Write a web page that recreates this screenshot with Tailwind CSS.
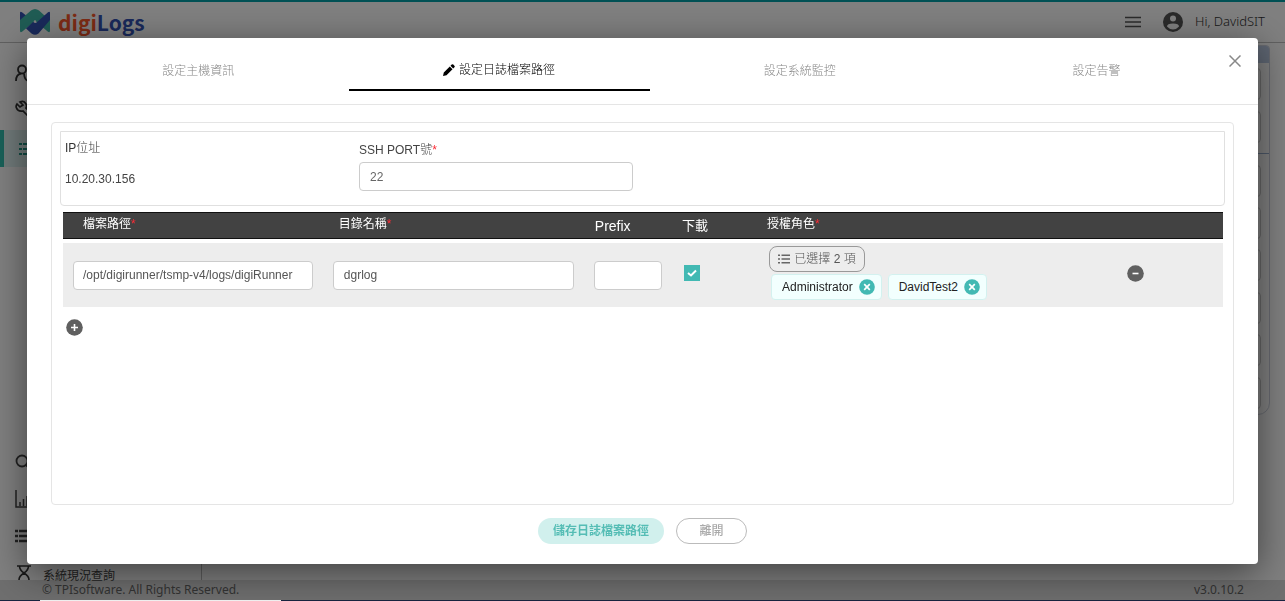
<!DOCTYPE html>
<html lang="zh-Hant">
<head>
<meta charset="utf-8">
<title>digiLogs</title>
<script src="https://cdn.jsdelivr.net/npm/@tailwindcss/browser@4"></script>
</head>
<body class="h-screen overflow-hidden bg-white font-['Liberation_Sans','Noto_Sans_CJK_TC',sans-serif] text-xs text-[#444]">
<div class="flex h-full flex-col">
  <header class="flex h-[43px] shrink-0 items-center justify-between border-t-2 border-b border-t-[#00a0a8] border-b-[#c0c0c0] pr-5 pl-5">
    <a href="#" class="flex items-center gap-2 font-['Noto_Sans_CJK_TC',sans-serif] text-[21px] leading-8 font-bold">
      <svg class="h-[26px] w-[30px]" viewBox="0 0 30 26" aria-hidden="true">
        <path d="M0 4Q0 2 2 3.200L8 8L0 14Z" fill="#3352b4"/>
        <path d="M0 11L11 1.500Q15-1.500 19 1.500L24 6L30 11V21.500Q30 24 28 22.800L15 12L2 22.800Q0 24 0 21.500Z" fill="#3fb8a8"/>
        <path d="M30 4V11L18.500 24.500Q15 27 11.500 24.500L6 19.500L13 13L16 14L28 3.200Q30 2 30 4Z" fill="#3352b4"/>
        <circle cx="15" cy="12.500" r="1.200" fill="#fff"/>
      </svg>
      <span><span class="text-[#f8562a]">digi</span><span class="text-[#3352b4]">Logs</span></span>
    </a>
    <div class="flex items-center">
      <button aria-label="選單" class="mr-[22px]"><svg class="h-3 w-4" viewBox="0 0 16 12" stroke="#555" stroke-width="1.500"><path d="M0 1.500H16M0 6H16M0 10.500H16"/></svg></button>
      <svg class="mr-3 size-5" viewBox="0 0 20 20" aria-hidden="true"><circle cx="10" cy="10" r="10" fill="#555"/><circle cx="10" cy="6.500" r="3" fill="#fff"/><path d="M4 14.500Q4 11.500 10 11.500T16 14.500Q13.500 17.500 10 17.500T4 14.500Z" fill="#fff"/></svg>
      <span class="font-['Noto_Sans',sans-serif] text-[13px] font-light text-[#333]">Hi, DavidSIT</span>
    </div>
  </header>
  <div class="flex min-h-0 flex-1">
    <nav class="flex w-[202px] shrink-0 flex-col justify-between border-r border-[#bbb] pt-3">
      <div>
        <a href="#" aria-label="使用者" class="flex h-9 items-center pl-[15px]"><svg class="size-[18px]" viewBox="0 0 18 18" fill="none" stroke="#333" stroke-width="1.800"><circle cx="7" cy="5.500" r="4"/><path d="M1 17Q1 10.500 6 9.500M9 9.500Q9.500 16 13 17"/></svg></a>
        <a href="#" aria-label="工具" class="flex h-9 items-center pl-[15px]"><svg class="size-[18px]" viewBox="0 0 18 18" fill="none" stroke="#333" stroke-width="1.700"><path d="M5 2Q9 0 11 4Q12 6 11 8L17 14L14 17L8 11Q3 12 1.500 8Q.5 6 2 4L5 7L8 5Z"/></svg></a>
        <a href="#" aria-label="日誌" class="mt-[3px] flex h-[37px] items-center border-l-4 border-[#30c0b0] bg-[#e0f4f3] pl-[14px]"><svg class="h-[14px] w-4" viewBox="0 0 16 14" stroke="#209888" stroke-width="2.200"><path d="M1 2H4M5 2H16M1 7H4M5 7H16M1 12H4M5 12H16"/></svg></a>
      </div>
      <div>
        <a href="#" aria-label="搜尋" class="flex h-[38px] items-center pl-[15px]"><svg class="size-4" viewBox="0 0 16 16" fill="none" stroke="#444" stroke-width="1.800"><circle cx="7" cy="8" r="5.500"/><path d="M11 12L15 16"/></svg></a>
        <a href="#" aria-label="報表" class="flex h-[38px] items-center pl-[15px]"><svg class="size-[18px]" viewBox="0 0 18 18" fill="none" stroke="#444" stroke-width="1.500"><path d="M1 0V17H17M5 16V12M8.500 16V9M12 16V6"/></svg></a>
        <a href="#" aria-label="清單" class="flex h-9 items-center pl-[15px]"><svg class="h-[14px] w-4" viewBox="0 0 16 14" stroke="#444" stroke-width="2.500"><path d="M0 2H3M4 2H16M0 7H3M4 7H16M0 12H3M4 12H16"/></svg></a>
        <a href="#" class="flex h-[26px] items-end gap-3 pl-[17px] text-[12px] leading-4 text-[#444]"><svg class="h-[18px] w-[14px]" viewBox="0 0 14 18" fill="none" stroke="#333" stroke-width="1.600"><path d="M0 4H14M2.500 4Q2.500 8 7 11Q11.500 8 11.500 4M2 18Q2 14 7 11Q12 14 12 18"/></svg><span class="translate-y-1">系統現況查詢</span></a>
      </div>
    </nav>
    <main class="flex-1 px-[15px] pt-[2px]">
      <div class="flex h-[370px] flex-col overflow-hidden rounded-b-xl rounded-t border border-[#d0d4e0]">
        <div class="h-[17px] bg-[#bccbe4]"></div>
        <div class="flex flex-1 flex-col justify-around pr-2">
          <div class="h-8 rounded border border-[#ccc]"></div>
          <div class="h-8 rounded border border-[#ccc]"></div>
          <div class="-mr-2 border-t border-[#9ab0d0]"></div>
          <div class="h-8 rounded border border-[#ccc]"></div>
          <div class="h-8 rounded border border-[#ccc]"></div>
          <div class="h-8 rounded border border-[#ccc]"></div>
          <div class="h-8 rounded border border-[#ccc]"></div>
          <div class="h-8 rounded border border-[#ccc]"></div>
          <div class="h-8 rounded border border-[#ccc]"></div>
        </div>
      </div>
    </main>
  </div>
  <footer class="flex h-5 shrink-0 items-center justify-between bg-[#dcdcdc] pr-[41px] pl-[42px] font-['Noto_Sans',sans-serif] text-[12px] text-[#666]">
    <span>© TPIsoftware. All Rights Reserved.</span><span>v3.0.10.2</span>
  </footer>
  <div class="h-px shrink-0 bg-[#304880]"></div>
</div>

<div class="fixed inset-0 flex bg-black/50 px-[27px] pt-[38px] pb-[37px]">
  <section role="dialog" aria-modal="true" aria-label="設定日誌檔案路徑" class="relative flex flex-1 flex-col rounded bg-white shadow-[0_8px_36px_rgba(0,0,0,0.5)]">
    <div class="grid h-[67px] shrink-0 grid-cols-4 border-b border-[#e5e5e5] pt-3 pr-[7px] pl-[21px] font-light text-[#888]">
      <button class="h-[41px]">設定主機資訊</button>
      <button class="flex h-[41px] items-center justify-center gap-1 border-b-2 border-black text-black"><svg class="size-3" viewBox="0 0 12 12"><path d="M0 12L.8 8.500L6.800 2.500L9.500 5.200L3.500 11.200ZM7.500 1.800L8.700.6Q9.500-.2 10.300.6L11.400 1.700Q12.200 2.500 11.400 3.300L10.200 4.500Z"/></svg>設定日誌檔案路徑</button>
      <button class="h-[41px]">設定系統監控</button>
      <button class="h-[41px] pr-2">設定告警</button>
    </div>
    <button aria-label="關閉" class="absolute top-[17px] right-[17px]"><svg class="size-3" viewBox="0 0 12 12" stroke="#888" stroke-width="1.500"><path d="M.5.5L11.500 11.500M11.500.5L.5 11.500"/></svg></button>

    <div class="mx-6 mt-[17px] flex flex-1 flex-col rounded border border-[#e5e5e5] px-2 pt-2">
      <div class="flex h-[75px] shrink-0 rounded-b border border-[#e0e0e0] pl-1">
        <div class="w-[294px] pt-2">
          <div class="font-light leading-4 text-[#333]">IP位址</div>
          <div class="mt-[15px] leading-4">10.20.30.156</div>
        </div>
        <div class="pt-[10px]">
          <label for="port" class="block leading-4">SSH PORT<span class="font-light">號</span><span class="text-red-500">*</span></label>
          <input id="port" value="22" class="mt-1 h-[29px] w-[274px] rounded border border-[#ccc] px-[10px] text-[#666]">
        </div>
      </div>

      <div class="mt-[2px] mr-[2px] ml-[3px]">
      <table class="w-full table-fixed border-separate border-spacing-x-0 border-spacing-y-1">
        <colgroup><col class="w-[22.4%]"><col class="w-[22.5%]"><col class="w-[7.6%]"><col class="w-[7.5%]"><col class="w-[31%]"><col></colgroup>
        <thead>
          <tr class="h-[27px] bg-[#424242] text-left text-[12px] leading-4 text-white">
            <th class="border-y border-[#111] pb-1 pl-5 font-normal">檔案路徑<span class="text-red-500">*</span></th>
            <th class="border-y border-[#111] pb-1 pl-4 font-normal">目錄名稱<span class="text-red-500">*</span></th>
            <th class="border-y border-[#111] pl-[11px] text-[14px] font-normal">Prefix</th>
            <th class="border-y border-[#111] pl-[10px] text-[13px] font-normal">下載</th>
            <th class="border-y border-[#111] pb-1 pl-2 font-normal">授權角色<span class="text-red-500">*</span></th>
            <th class="border-y border-[#111]"></th>
          </tr>
        </thead>
        <tbody>
          <tr class="h-16 bg-[#ededed]">
            <td class="px-[10px]"><input aria-label="檔案路徑" value="/opt/digirunner/tsmp-v4/logs/digiRunner" class="block h-[29px] w-full rounded border border-[#ccc] bg-white px-[9px] text-[#555]"></td>
            <td class="px-[10px]"><input aria-label="目錄名稱" value="dgrlog" class="block h-[29px] w-full rounded border border-[#ccc] bg-white px-[10px] text-[#555]"></td>
            <td class="px-[10px]"><input aria-label="Prefix" class="block h-[29px] w-full rounded border border-[#ccc] bg-white px-[10px]"></td>
            <td class="pb-1 pl-3">
              <label class="relative block size-4"><input type="checkbox" checked aria-label="下載" class="block size-4 appearance-none bg-[#42b9b3]"><svg class="absolute inset-0 size-4" viewBox="0 0 16 16" fill="none" stroke="#fff" stroke-width="2"><path d="M4 8L7 10.500L12 5.500"/></svg></label>
            </td>
            <td class="pb-1 pl-[10px]">
              <button class="flex h-[26px] w-24 items-center justify-center gap-1 rounded-lg border border-[#999] font-light text-[#555]"><svg class="h-[10px] w-3" viewBox="0 0 12 10" stroke="#666" stroke-width="1.500"><path d="M0 1.200H2M3.500 1.200H12M0 5H2M3.500 5H12M0 8.800H2M3.500 8.800H12"/></svg>已選擇 2 項</button>
              <div class="mt-[2px] ml-[2px] flex gap-[6px] text-[#222]">
                <span class="flex h-[26px] items-center gap-[6px] rounded border border-[#d3f1ef] bg-[#f2fffe] pr-[6px] pl-[10px]">Administrator<button aria-label="移除 Administrator"><svg class="block size-4" viewBox="0 0 16 16"><circle cx="8" cy="8" r="7.800" fill="#42b9b3"/><path d="M5.200 5.200L10.800 10.800M10.800 5.200L5.200 10.800" stroke="#fff" stroke-width="1.700"/></svg></button></span>
                <span class="flex h-[26px] items-center gap-[6px] rounded border border-[#d3f1ef] bg-[#f2fffe] pr-[6px] pl-[10px]">DavidTest2<button aria-label="移除 DavidTest2"><svg class="block size-4" viewBox="0 0 16 16"><circle cx="8" cy="8" r="7.800" fill="#42b9b3"/><path d="M5.200 5.200L10.800 10.800M10.800 5.200L5.200 10.800" stroke="#fff" stroke-width="1.700"/></svg></button></span>
              </div>
            </td>
            <td class="pb-1 pl-2"><button aria-label="刪除列" class="block"><svg class="block size-[17px]" viewBox="0 0 17 17"><circle cx="8.500" cy="8.500" r="8.300" fill="#606060"/><path d="M5.500 8.500H11.500" stroke="#fff" stroke-width="1.600"/></svg></button></td>
          </tr>
        </tbody>
      </table>
      <button aria-label="新增列" class="mt-2 ml-[3px] block"><svg class="block size-[17px]" viewBox="0 0 17 17"><circle cx="8.500" cy="8.500" r="8.300" fill="#606060"/><path d="M5 8.500H12M8.500 5V12" stroke="#fff" stroke-width="1.600"/></svg></button>
      </div>
    </div>

    <div class="flex h-[59px] shrink-0 items-start justify-center gap-3 pt-[13px]">
      <button class="h-[26px] w-[126px] rounded-full bg-[#d1f0ed] font-bold text-[#55bdb5]">儲存日誌檔案路徑</button>
      <button class="h-[26px] w-[71px] rounded-full border border-[#bbb] font-medium text-[#aaa]">離開</button>
    </div>
  </section>
  <div class="absolute bottom-0 left-10 h-px w-[241px] bg-[#eee]"></div>
</div>
</body>
</html>
